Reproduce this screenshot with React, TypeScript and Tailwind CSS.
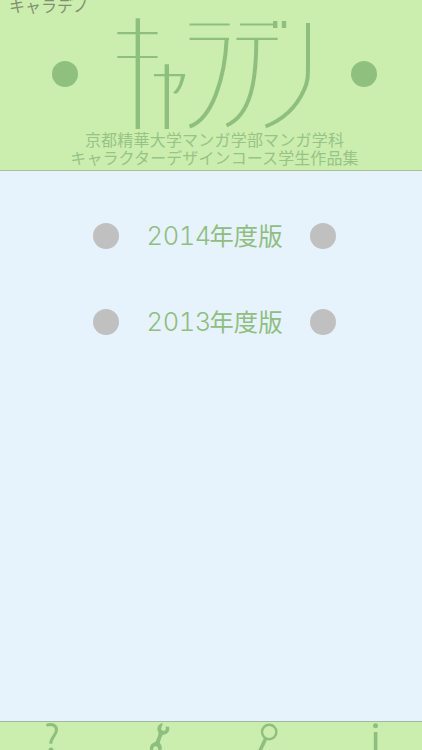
const fontStack = "font-['Noto_Sans_CJK_JP',sans-serif]";

function Logo() {
  return (
    <svg width="194" height="112" viewBox="117 18 194 112" fill="none" stroke="#8fbf7e" aria-label="キャラデノ">
      <g strokeWidth="2.2">
        <path d="M117.3 33.2H157.6M117.3 57H157.6M154 75.2H185M189.5 24.5H229.7M189.5 38.8H229M240 24.5H273.5M236.5 38.8H277.7" />
      </g>
      <g strokeWidth="4.4">
        <path d="M137.8 18.3V129M166.8 64.2V129M275.2 21V28M284 21V28" />
        <path d="M308 23V65C308 76 308 82 304 90C296 108 282 120 265.5 126.5" strokeWidth="4" />
      </g>
      <path d="M226.7 38C225 78 212 119 189.5 126.5" strokeWidth="4" />
      <path d="M256.3 38C256.5 80 251 115 226.5 125.5" strokeWidth="4" />
      <path d="M181 75L185.3 74.4C183.5 83 180.5 90 177 93.2C175.8 94 174.4 93.8 173 92.6C177.5 89 180.3 83 181 75Z" fill="#8fbf7e" stroke="none" />
    </svg>
  );
}

function YearRow({ label }: { label: string }) {
  return (
    <button className="flex h-[86px] w-full items-center justify-center">
      <span className="size-[26px] shrink-0 rounded-full bg-[#c0c0c0]" />
      <span className="flex h-9 w-[191px] items-center justify-center">
        <span className="flex items-center whitespace-nowrap pb-0.5 text-[24.3px] font-normal leading-9 text-[#8fbd82]">
          <span className="inline-block w-[63px] pt-px font-['Inter',sans-serif] text-[25.5px] font-light tabular-nums tracking-[-0.4px]">{label}</span>
          年度版
        </span>
      </span>
      <span className="size-[26px] shrink-0 rounded-full bg-[#c0c0c0]" />
    </button>
  );
}

export default function App() {
  return (
    <div className={`flex h-[750px] w-[422px] flex-col overflow-hidden bg-[#e7f3fc] ${fontStack}`}>
      <header className="flex h-[171px] shrink-0 flex-col border-b border-[#a9bfa0] bg-[#cbeeaf]">
        <div className="flex h-[18px] items-start pl-[9px]">
          <h1 className="-mt-[7px] whitespace-nowrap text-[16px] font-normal leading-6 text-[#82906f]">キャラデノ</h1>
        </div>
        <div className="flex h-28 pl-[52px]">
          <span className="mt-[43px] size-[26px] rounded-full bg-[#8fc07e]" />
          <div className="ml-[39px]">
            <Logo />
          </div>
          <span className="ml-10 mt-[43px] size-[26px] rounded-full bg-[#8fc07e]" />
        </div>
        <div className="whitespace-nowrap pl-[7px] text-center text-[16px] font-normal leading-[18px] tracking-[0.1px] text-[#98c386]">
          <p className="tracking-[0.2px]">京都精華大学マンガ学部マンガ学科</p>
          <p>キャラクターデザインコース学生作品集</p>
        </div>
      </header>
      <main className="flex flex-1 flex-col pl-[7px] pt-[22px]">
        <YearRow label="2014" />
        <YearRow label="2013" />
      </main>
      <footer className="flex h-[29px] shrink-0 border-t border-[#a0b89d] bg-[#cbeeaf] pl-[38px] text-[#8fbf7e]">
        <svg width="108" height="28" viewBox="38 722 108 28" fill="none" stroke="currentColor">
          <path d="M46.4 725.5C51 723.3 56.5 724.8 56.5 730C56.5 735 50.8 737 50.8 743.8" strokeWidth="3" />
          <circle cx="51" cy="750" r="2.5" fill="currentColor" stroke="none" />
        </svg>
        <svg width="108" height="28" viewBox="146 722 108 28" fill="currentColor">
          <path d="M162.8 723C158.4 723.8 156.4 727.4 157.8 731.2C158.4 732.6 158.8 733.2 158.4 734.4L156.2 740.6C155.8 741.6 155.2 742 154 742.4C150.6 743.6 149.2 747 150.2 751H153.6C152.6 748.2 153.6 746.2 155.6 746.2C157.6 746.2 158.6 748.2 157.8 751H161.2C162.2 748.2 161.8 745.6 160.4 743.8C159.8 743 159.8 742.4 160.1 741.4L161.8 736.4C162.1 735.4 162.8 735 163.8 734.8C168 734 170.2 730.8 169 726.8L165.6 726.6C166.4 729.4 165.2 731.2 163.2 730.8C161 730.4 160.4 728.2 162.2 725.8Z" />
        </svg>
        <svg width="108" height="28" viewBox="254 722 108 28" fill="none" stroke="currentColor">
          <circle cx="269.2" cy="732" r="7.2" strokeWidth="2.4" />
          <path d="M265.7 738.5L259.8 751" strokeWidth="3.6" />
        </svg>
        <svg width="60" height="28" viewBox="362 722 60 28" fill="currentColor">
          <circle cx="375.5" cy="725.8" r="2.5" />
          <rect x="373.8" y="732" width="3.6" height="18" />
        </svg>
      </footer>
    </div>
  );
}
